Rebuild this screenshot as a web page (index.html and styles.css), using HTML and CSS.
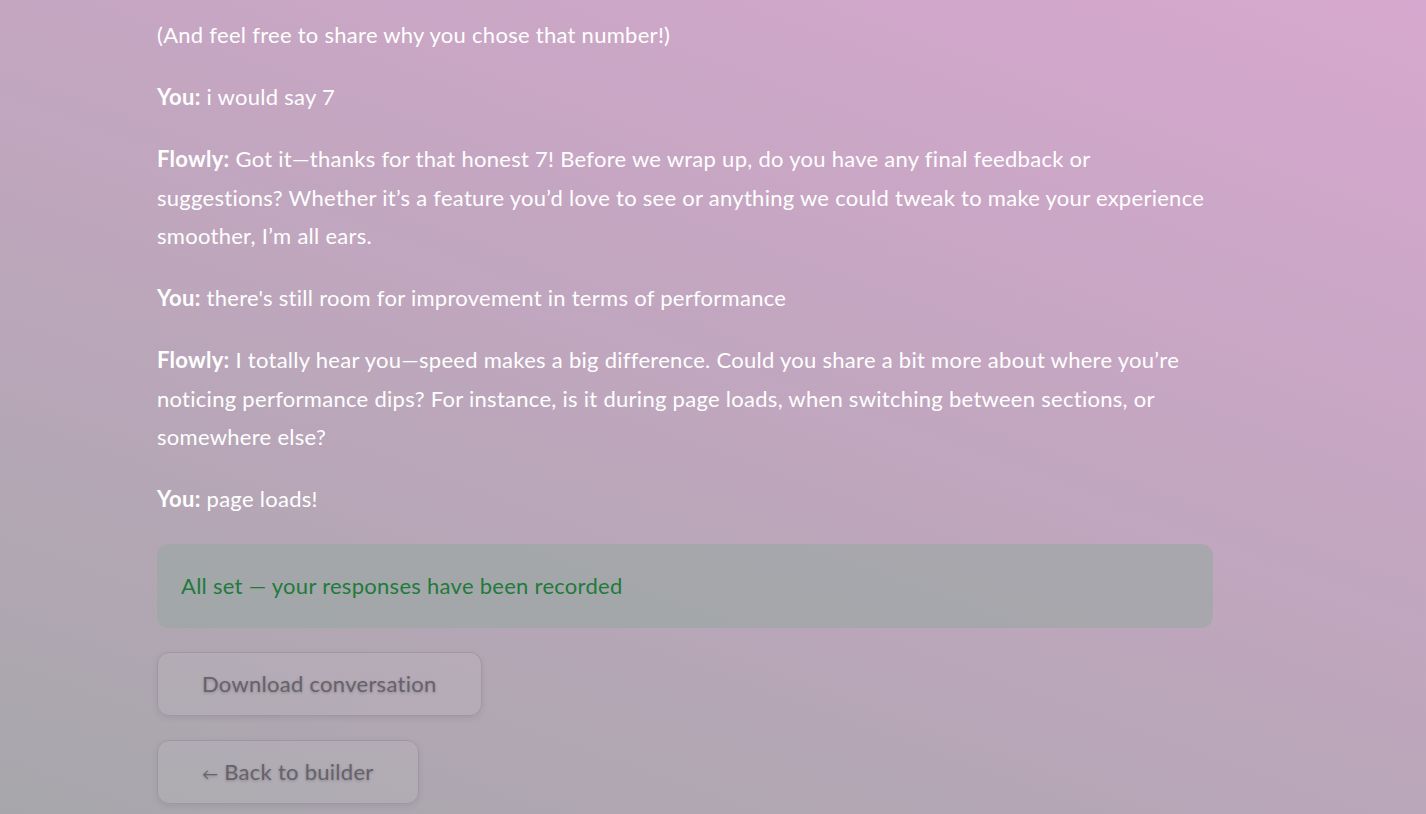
FILE: index.html
```html
<!DOCTYPE html>
<html lang="en">
<head>
<meta charset="utf-8">
<title>Conversation</title>
<link rel="stylesheet" href="styles.css">
</head>
<body>
<main class="page">
  <section class="transcript">
    <p>(And feel free to share why you chose that number!)</p>
    <p><strong>You:</strong> i would say 7</p>
    <p><strong>Flowly:</strong> Got it—thanks for that honest 7! Before we wrap up, do you have any final feedback or suggestions? Whether it’s a feature you’d love to see or anything we could tweak to make your experience smoother, I’m all ears.</p>
    <p><strong>You:</strong> there's still room for improvement in terms of performance</p>
    <p><strong>Flowly:</strong> I totally hear you—speed makes a big difference. Could you share a bit more about where you’re noticing performance dips? For instance, is it during page loads, when switching between sections, or somewhere else?</p>
    <p><strong>You:</strong> page loads!</p>
  </section>
  <div class="notice">All set — your responses have been recorded</div>
  <div class="actions">
    <button class="btn" type="button">Download conversation</button>
    <button class="btn" type="button"><span class="arrow">←</span> Back to builder</button>
  </div>
</main>
</body>
</html>
```

FILE: styles.css
```css
html, body {
  margin: 0;
  height: 100%;
}
body {
  background: linear-gradient(200deg, #d7a8cf 0%, #c4a6c1 40%, #a7a7ab 100%);
  font-family: "Lato", "Liberation Sans", sans-serif;
  font-size: 22px;
  letter-spacing: 0.28px;
  color: #fff;
  overflow: hidden;
}
.page {
  width: 1056px;
  margin-left: 157px;
  padding-top: 16px;
  display: flex;
  flex-direction: column;
  gap: 24px;
}
.transcript {
  margin-bottom: 1px;
}
.transcript p {
  margin: 0 0 23.5px;
  line-height: 38.5px;
}
.transcript p:last-child {
  margin-bottom: 0;
}
.transcript strong {
  font-weight: 700;
}
.notice {
  background: rgba(150, 168, 160, 0.55);
  border-radius: 12px;
  height: 84px;
  padding: 0 24px;
  display: flex;
  align-items: center;
  color: #1f7a3c;
}
.actions {
  display: flex;
  flex-direction: column;
  align-items: flex-start;
  gap: 24px;
}
.btn {
  font-family: inherit;
  font-size: 22px;
  letter-spacing: 0.28px;
  height: 64px;
  padding: 0 44px;
  border: 1px solid #9f97a3;
  border-radius: 12px;
  background: rgba(255, 255, 255, 0.06);
  color: #67626b;
  text-shadow: 0 1px 3px rgba(0, 0, 0, 0.22);
  box-shadow: 0 2px 6px rgba(0, 0, 0, 0.08);
}
.arrow {
  font-size: 16px;
}
```
